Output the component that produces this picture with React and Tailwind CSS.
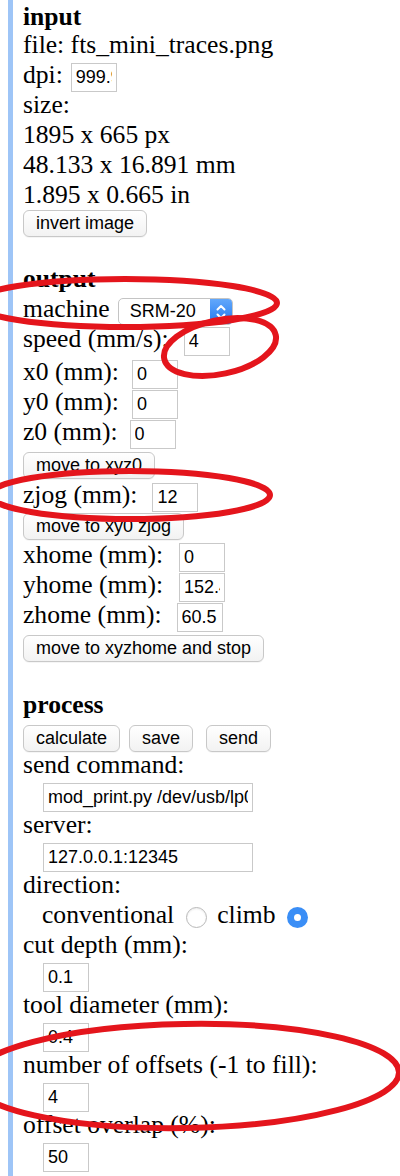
const sans = "font-['Liberation_Sans',Arial,sans-serif]";

function Field({ value, w = "w-[46px]", ml = "" }) {
  return (
    <input
      type="text"
      readOnly
      value={value}
      className={`${w} ${ml} mt-[3px] h-[29px] shrink-0 border border-[#c9c9c9] bg-white px-[4px] text-[18px] leading-[27px] text-black outline-none ${sans}`}
    />
  );
}

function Btn({ children, ml = "" }) {
  return (
    <button
      type="button"
      className={`${ml} h-[27px] shrink-0 rounded-[6px] border border-[#c8c8c8] bg-linear-to-b from-white to-[#f2f2f2] px-[12px] text-[18px] leading-[25px] text-black shadow-[0_1px_0_rgba(0,0,0,0.04)] ${sans}`}
    >
      {children}
    </button>
  );
}

function Row({ children, h = "h-[30px]", className = "" }) {
  return <div className={`flex ${h} items-start whitespace-pre ${className}`}>{children}</div>;
}

function Select() {
  return (
    <div className="ml-[8px] mt-[4px] flex h-[27px] w-[115px] overflow-hidden rounded-[5px] border border-[#c4c4c4] bg-white">
      <span className={`flex-1 pl-[11px] text-[18px] leading-[25px] text-black ${sans}`}>SRM-20</span>
      <span className="flex w-[22px] items-center justify-center bg-linear-to-b from-[#62a8fb] to-[#1d78ef]">
        <svg width="12" height="20" viewBox="0 0 12 20" fill="none" stroke="white" strokeWidth="2" strokeLinecap="round" strokeLinejoin="round">
          <path d="M2.5 7.5 L6 4 L9.5 7.5" />
          <path d="M2.5 12.5 L6 16 L9.5 12.5" />
        </svg>
      </span>
    </div>
  );
}

export default function App() {
  return (
    <div className="relative h-[1176px] w-full overflow-hidden bg-white text-black">
      <div className="flex h-full">
        <div className="ml-[8px] w-[5px] shrink-0 bg-[#9ec5f7]" />
        <div className="pl-[10px] font-['Liberation_Serif','Times_New_Roman',serif] text-[25.6px] leading-[30px]">
          <Row className="pt-[2px]"><b>input</b></Row>
          <Row>file: fts_mini_traces.png</Row>
          <Row>dpi:<Field value="999.9" ml="ml-[8px]" /></Row>
          <Row>size:</Row>
          <Row>1895 x 665 px</Row>
          <Row>48.133 x 16.891 mm</Row>
          <Row>1.895 x 0.665 in</Row>
          <Row><Btn>invert image</Btn></Row>
          <Row h="h-[24px]" />

          <Row><b>output</b></Row>
          <Row>machine<Select /></Row>
          <Row h="h-[33px]">speed (mm/s):<Field value="4" ml="ml-[15px]" /></Row>
          <Row>x0 (mm):<Field value="0" ml="ml-[13px]" /></Row>
          <Row>y0 (mm):<Field value="0" ml="ml-[13px]" /></Row>
          <Row h="h-[31px]">z0 (mm):<Field value="0" ml="ml-[12px]" /></Row>
          <Row h="h-[32px]"><span className="mt-[4px] flex"><Btn>move to xyz0</Btn></span></Row>
          <Row>zjog (mm):<Field value="12" ml="ml-[15px]" /></Row>
          <Row><span className="mt-[3px] flex"><Btn>move to xy0 zjog</Btn></span></Row>
          <Row>xhome (mm):<Field value="0" ml="ml-[16px]" /></Row>
          <Row>yhome (mm):<Field value="152.4" ml="ml-[16px]" /></Row>
          <Row>zhome (mm):<Field value="60.5" ml="ml-[15px]" /></Row>
          <Row><span className="mt-[5px] flex"><Btn>move to xyzhome and stop</Btn></span></Row>
          <Row />

          <Row><b>process</b></Row>
          <Row>
            <span className="mt-[5px] flex">
              <Btn>calculate</Btn>
              <Btn ml="ml-[9px]">save</Btn>
              <Btn ml="ml-[13px]">send</Btn>
            </span>
          </Row>
          <Row>send command:</Row>
          <Row><Field value="mod_print.py /dev/usb/lp0" w="w-[210px]" ml="ml-[20px]" /></Row>
          <Row>server:</Row>
          <Row><Field value="127.0.0.1:12345" w="w-[210px]" ml="ml-[20px]" /></Row>
          <Row>direction:</Row>
          <Row className="pl-[19px]">
            conventional
            <span className="ml-[12px] mt-[7px] h-[21px] w-[21px] shrink-0 rounded-full border border-[#b9b9b9] bg-white shadow-[inset_0_1px_2px_rgba(0,0,0,0.08)]" />
            <span className="ml-[10px]">climb</span>
            <span className="ml-[11px] mt-[7px] flex h-[21px] w-[21px] shrink-0 items-center justify-center rounded-full bg-[#3a8ef6]">
              <span className="h-[7px] w-[7px] rounded-full bg-white" />
            </span>
          </Row>
          <Row>cut depth (mm):</Row>
          <Row><Field value="0.1" ml="ml-[20px]" /></Row>
          <Row>tool diameter (mm):</Row>
          <Row><Field value="0.4" ml="ml-[20px]" /></Row>
          <Row>number of offsets (-1 to fill):</Row>
          <Row><Field value="4" ml="ml-[20px]" /></Row>
          <Row>offset overlap (%):</Row>
          <Row><Field value="50" ml="ml-[20px]" /></Row>
        </div>
      </div>

      {/* red hand-drawn annotation rings */}
      <svg
        className="pointer-events-none absolute left-0 top-0"
        width="400"
        height="1176"
        viewBox="0 0 400 1176"
        fill="none"
        stroke="#e4151c"
        strokeWidth="6"
      >
        <ellipse cx="125" cy="303" rx="152" ry="24" />
        <ellipse cx="220" cy="347" rx="57" ry="27" transform="rotate(-12 220 347)" />
        <ellipse cx="130" cy="495" rx="140" ry="24" />
        <ellipse cx="185" cy="1076" rx="214" ry="52" transform="rotate(-1 185 1076)" />
      </svg>
    </div>
  );
}
